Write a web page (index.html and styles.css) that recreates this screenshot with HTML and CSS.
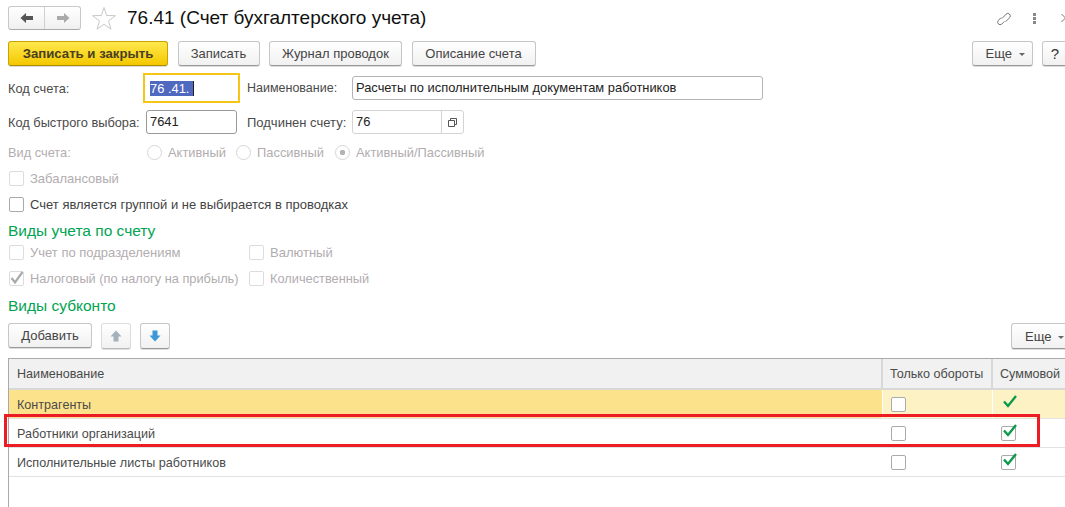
FILE: index.html
```html
<!DOCTYPE html>
<html lang="ru">
<head>
<meta charset="utf-8">
<title>76.41 (Счет бухгалтерского учета)</title>
<link rel="stylesheet" href="styles.css">
</head>
<body>
<div class="page">
  <header class="titlebar">
    <div class="navgroup">
      <span class="navbtn"><svg width="14" height="12" viewBox="0 0 14 12"><path d="M0.500 6 6 1v3h7v4H6v3z" fill="#555"/></svg></span>
      <span class="navbtn last"><svg width="14" height="12" viewBox="0 0 14 12"><path d="M13.500 6 8 1v3H1v4h7v3z" fill="#aaa"/></svg></span>
    </div>
    <svg class="star" width="24" height="24" viewBox="0 0 24 24"><path d="M12 1.500l2.700 8 8.800.2-7 5.200 2.500 8.300L12 18.300l-7 4.900 2.500-8.300-7-5.200 8.800-.2z" fill="none" stroke="#c8c8c8"/></svg>
    <h1 class="title">76.41 (Счет бухгалтерского учета)</h1>
    <div class="winicons">
      <svg width="16" height="16" viewBox="0 0 16 16"><path d="M6 8.500 10 4.200a2.500 2.500 0 0 1 3.600 3.500L9.500 11.800M5.200 7.500 2.200 10.700a2.500 2.500 0 0 0 3.500 3.500L8.300 11.500" fill="none" stroke="#777"/></svg>
      <span class="dots"><i></i><i></i><i></i></span>
      <svg class="chev" width="5" height="10" viewBox="0 0 5 10"><path d="M.5 1l4 4-4 4" fill="none" stroke="#777"/></svg>
    </div>
  </header>

  <div class="toolbar">
    <button class="btn primary w160">Записать и закрыть</button>
    <button class="btn w82">Записать</button>
    <button class="btn w133">Журнал проводок</button>
    <button class="btn w124">Описание счета</button>
    <div class="spacer"></div>
    <button class="btn w61">Еще <span class="caret"></span></button>
    <button class="btn help">?</button>
  </div>

  <div class="row r-code">
    <label class="lbl first">Код счета:</label>
    <div class="field focus"><span class="sel">76 .41.</span><span class="cursor"></span></div>
    <label class="lbl second">Наименование:</label>
    <div class="field name">Расчеты по исполнительным документам работников</div>
  </div>

  <div class="row r-quick">
    <label class="lbl first">Код быстрого выбора:</label>
    <div class="field quick">7641</div>
    <label class="lbl second wide">Подчинен счету:</label>
    <div class="field parent"><span class="val">76</span><span class="pick"><svg width="9" height="9" viewBox="0 0 9 9"><path d="M2.500 2.500V.5h6v6h-2M.5 2.500h6v6h-6z" fill="#fff" stroke="#555"/></svg></span></div>
  </div>

  <div class="row r-kind muted">
    <label class="lbl first">Вид счета:</label>
    <span class="radio"></span><span class="rlabel l1">Активный</span>
    <span class="radio"></span><span class="rlabel l2">Пассивный</span>
    <span class="radio on"></span><span class="rlabel">Активный/Пассивный</span>
  </div>

  <div class="check-row r-off muted"><span class="cb dis"></span><span>Забалансовый</span></div>
  <div class="check-row r-group"><span class="cb"></span><span>Счет является группой и не выбирается в проводках</span></div>

  <h2 class="section s1">Виды учета по счету</h2>
  <div class="twocol muted c1">
    <div class="check-row cell"><span class="cb dis"></span><span>Учет по подразделениям</span></div>
    <div class="check-row"><span class="cb dis"></span><span>Валютный</span></div>
  </div>
  <div class="twocol muted c2">
    <div class="check-row cell"><span class="cb dis"><svg width="15" height="15" viewBox="0 0 15 15"><path d="M2.500 7l3.500 4.500L13.500 1" fill="none" stroke="#aaa" stroke-width="2.200"/></svg></span><span class="tax">Налоговый (по налогу на прибыль)</span></div>
    <div class="check-row"><span class="cb dis"></span><span class="tax">Количественный</span></div>
  </div>

  <h2 class="section s2">Виды субконто</h2>
  <div class="toolbar t2">
    <button class="btn w84">Добавить</button>
    <button class="btn icon dis"><svg width="12" height="12" viewBox="0 0 12 12"><path d="M6 .5 11.500 6.500H8.500V11.500h-5V6.500H.5z" fill="#a4b1bb"/></svg></button>
    <button class="btn icon"><svg width="12" height="12" viewBox="0 0 12 12"><path d="M6 11.500 11.500 5.500H8.500V.5h-5V5.500H.5z" fill="#3e97d6"/></svg></button>
    <div class="spacer"></div>
    <button class="btn more">Еще <span class="caret"></span></button>
  </div>

  <div class="table">
    <div class="tr head">
      <div class="td c-name">Наименование</div>
      <div class="td c-turn">Только обороты</div>
      <div class="td c-sum">Суммовой</div>
    </div>
    <div class="tr current">
      <div class="td c-name">Контрагенты</div>
      <div class="td c-turn"><span class="cb"></span></div>
      <div class="td c-sum"><svg class="tick solo" width="16" height="15" viewBox="0 0 16 15"><path d="M2 7.500l4 4.500L14 2" fill="none" stroke="#0a9a4a" stroke-width="2.400"/></svg></div>
    </div>
    <div class="tr">
      <div class="td c-name">Работники организаций</div>
      <div class="td c-turn"><span class="cb"></span></div>
      <div class="td c-sum"><span class="cb"><svg class="tick" width="16" height="15" viewBox="0 0 16 15"><path d="M2 7.500l4 4.500L14 2" fill="none" stroke="#0a9a4a" stroke-width="2.400"/></svg></span></div>
    </div>
    <div class="tr">
      <div class="td c-name">Исполнительные листы работников</div>
      <div class="td c-turn"><span class="cb"></span></div>
      <div class="td c-sum"><span class="cb"><svg class="tick" width="16" height="15" viewBox="0 0 16 15"><path d="M2 7.500l4 4.500L14 2" fill="none" stroke="#0a9a4a" stroke-width="2.400"/></svg></span></div>
    </div>
    <div class="redbox"></div>
  </div>
</div>
</body>
</html>
```
FILE: styles.css
```css
* { box-sizing: border-box; }
html, body { margin: 0; padding: 0; }
body { width: 1065px; height: 507px; overflow: hidden; background: #fff; font-family: "Liberation Sans", Arial, sans-serif; font-size: 13px; color: #4a4a4a; }
.page { width: 1073px; padding-left: 8px; height: 507px; overflow: hidden; }
.spacer { flex: 1; }
.titlebar { display: flex; align-items: center; height: 41px; padding-bottom: 5px; }
.navgroup { display: flex; width: 73px; height: 24px; border: 1px solid #c8c8c8; border-bottom-color: #aaa; border-radius: 3px; background: linear-gradient(#fff, #f0f0f0); }
.navbtn { flex: 1; display: flex; align-items: center; justify-content: center; border-right: 1px solid #d0d0d0; }
.navbtn.last { border-right: 0; }
.star { margin-left: 11px; }
.title { margin: 0 0 0 11px; font-size: 19px; font-weight: 400; color: #111; }
.winicons { display: flex; align-items: center; margin-left: auto; margin-right: 7px; gap: 21px; }
.chev { margin-left: 4px; }
.dots { display: flex; flex-direction: column; gap: 1px; }
.dots i { display: block; width: 3px; height: 3px; background: #888; }
.toolbar { display: flex; align-items: flex-start; height: 25px; gap: 9.500px; width: 1066px; }
.btn { height: 25px; padding: 0; border: 1px solid #c6c6c6; border-bottom-color: #999; border-radius: 3px; background: linear-gradient(#fff, #f1f1f1); font: 13px "Liberation Sans", Arial, sans-serif; color: #444; box-shadow: 0 1px 0 #ddd; }
.primary { background: linear-gradient(#ffe84d, #f4c800); border-color: #c9a400; border-bottom-color: #a98c00; font-weight: 700; font-size: 13.200px; color: #4a4020; }
.w160 { width: 160px; }
.w82 { width: 82px; }
.w133 { width: 133px; }
.w124 { width: 124px; }
.w61 { width: 61px; padding-left: 6px; }
.w84 { width: 84px; }
.help { width: 32px; font-size: 15px; color: #333; padding-right: 6px; }
.caret { display: inline-block; width: 0; height: 0; border: 3px solid transparent; border-top-color: #666; border-bottom: 0; margin-left: 3px; vertical-align: 2px; }
.icon { width: 30px; height: 26px; display: flex; align-items: center; justify-content: center; }
.icon.dis { border-color: #ddd; border-bottom-color: #bbb; }
.more { width: 63px; height: 26px; text-align: left; padding-left: 13px; }
.row { display: flex; align-items: center; width: 1065px; }
.r-code { height: 30px; margin-top: 7px; }
.r-quick { height: 24px; margin-top: 7px; }
.r-kind { height: 16px; margin-top: 10px; }
.lbl.first { width: 135px; flex: none; font-size: 12.800px; }
.lbl.second { flex: none; width: 105px; font-size: 12.500px; }
.lbl.second.wide { font-size: 13px; }
.field { height: 24px; border: 1px solid #b4b4b4; border-radius: 3px; line-height: 22px; padding-left: 3px; color: #222; background: #fff; flex: none; font-size: 12.900px; }
.focus { width: 97px; height: 30px; border: 2px solid #f5c518; border-radius: 0; line-height: 26px; margin-right: 7px; padding-left: 5px; display: flex; align-items: center; }
.sel { background: #4f68c0; color: #fff; height: 15px; line-height: 15px; padding-right: 4px; }
.cursor { width: 1px; height: 15px; background: #222; }
.name { width: 411px; }
.quick { width: 91px; margin: 0 10px 0 3px; border-color: #999; }
.r-quick .field.parent { width: 112px; display: flex; padding: 0; border-color: #d4d4d4; }
.val { flex: 1; padding-left: 3px; }
.pick { width: 22px; border-left: 1px solid #d4d4d4; display: flex; align-items: center; justify-content: center; }
.muted, .muted .lbl { color: #b2adb0; }
.r-kind .lbl.first { width: 139px; }
.radio { width: 15px; height: 15px; border: 1px solid #d6d6d6; border-radius: 50%; flex: none; margin-right: 6px; background: #fff; }
.radio.on { background: radial-gradient(circle, #b4b4b4 0 2.500px, #fff 3px); }
.rlabel.l1 { width: 68px; flex: none; }
.rlabel.l2 { width: 78px; flex: none; }
.rlabel { font-size: 12.900px; }
.check-row { display: flex; align-items: center; gap: 6px; height: 16px; padding-left: 1px; }
.tax { font-size: 12.800px; }
.cb { position: relative; display: inline-block; width: 15px; height: 15px; border: 1px solid #aaa; border-radius: 2px; background: #fff; flex: none; }
.cb.dis { border-color: #dcdcdc; }
.cb svg { position: absolute; left: -1px; top: -1px; }
.cb .tick { left: 0; top: -4px; }
.solo { margin-left: 1px; margin-top: -6px; }
.r-off { margin-top: 10px; }
.r-group { margin-top: 10px; color: #444; }
.section { margin: 0; font-size: 15.500px; line-height: 18px; font-weight: 400; color: #00a451; }
.s1 { margin-top: 10px; }
.s2 { margin-top: 11px; }
.twocol { display: flex; }
.c1 { margin-top: 4px; }
.c2 { margin-top: 10px; }
.cell { width: 240px; }
.t2 { margin-top: 8px; height: 26px; gap: 9px; }
.table { position: relative; margin-top: 9px; width: 1065px; border-top: 1px solid #aaa; border-left: 1px solid #aaa; height: 150px; font-size: 12.600px; }
.tr { display: flex; height: 29px; border-bottom: 1px solid #e2e2e2; }
.tr.head { height: 31px; background: #f1f1f1; border-bottom: 2px solid #d8d8d8; }
.tr.head .td { border-right: 2px solid #d8d8d8; }
.tr.current { background: #fdf2c4; }
.tr.current .c-name { background: #fde28c; }
.tr.current .td { border-right: 1px solid #fff; }
.td { display: flex; align-items: center; flex: none; }
.c-name { width: 874px; padding-left: 8px; }
.tr:not(.head) .c-name { padding-top: 2px; }
.c-turn { width: 110px; padding-left: 7px; }
.c-sum { width: 80px; padding-left: 7px; }
.tr:not(.head) .c-turn, .tr:not(.head) .c-sum { padding-left: 8px; }
.redbox { position: absolute; left: -5px; top: 55px; width: 1036px; height: 33px; border: 3px solid #ed1c24; }
```
